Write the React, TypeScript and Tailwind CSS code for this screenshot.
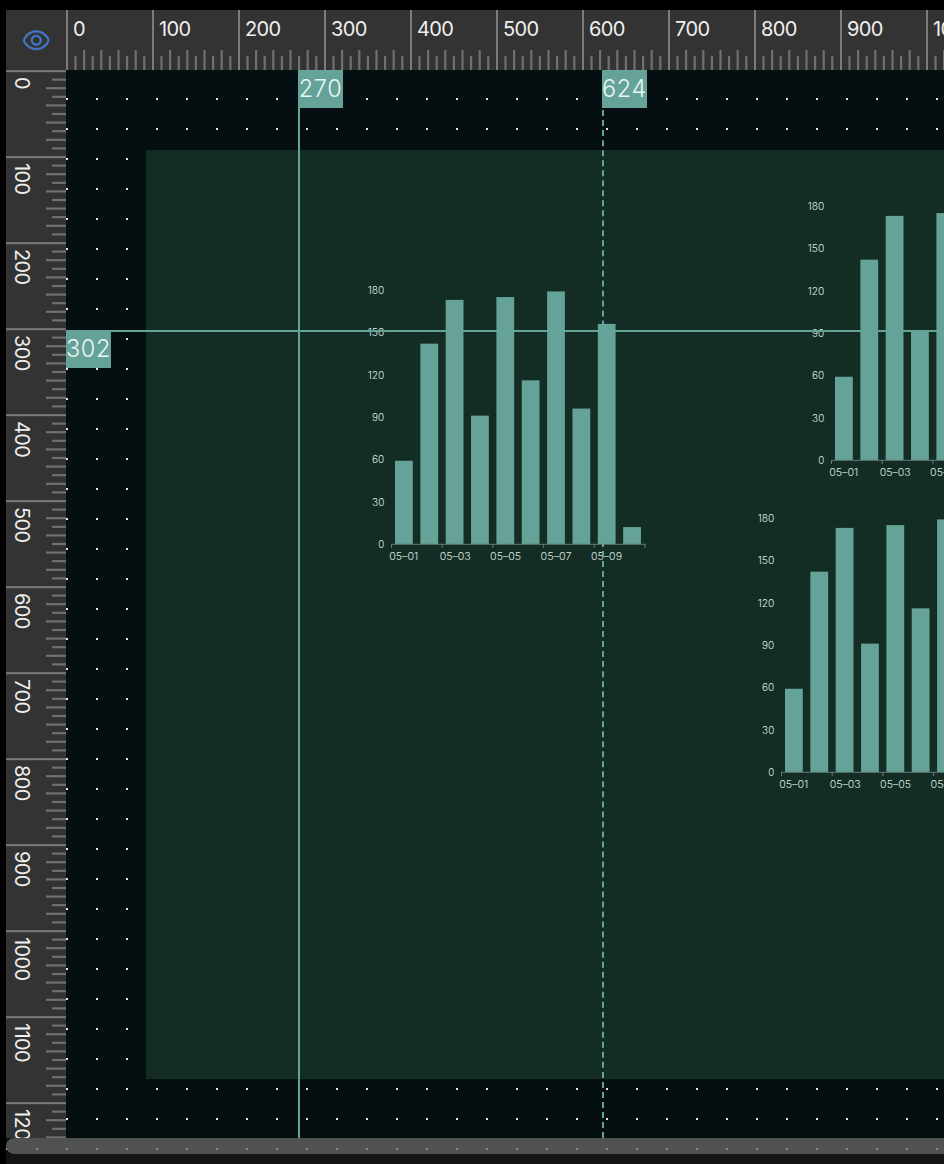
const MAJORS = [0, 100, 200, 300, 400, 500, 600, 700, 800, 900, 1000, 1100, 1200];
const TOP_MAJORS = MAJORS.slice(0, 11);
const MINORS = [1, 2, 3, 4, 5, 6, 7, 8, 9];
const VALUES = [59, 142, 173, 91, 175, 116, 179, 96, 156, 12];
const LEVELS = [0, 30, 60, 90, 120, 150, 180];

function EyeIcon() {
  return (
    <svg viewBox="0 0 32 32" className="h-[28.5px] w-[28.5px] fill-[#3f7ccd] stroke-[#3f7ccd] stroke-[0.5]">
      <path d="M30.94,15.66A16.69,16.69,0,0,0,16,5,16.69,16.69,0,0,0,1.06,15.66a1,1,0,0,0,0,.68A16.69,16.69,0,0,0,16,27,16.69,16.69,0,0,0,30.94,16.34,1,1,0,0,0,30.94,15.66ZM16,25c-5.3,0-10.9-3.93-12.93-9C5.1,10.93,10.7,7,16,7s10.9,3.93,12.93,9C26.9,21.07,21.3,25,16,25Z" />
      <path d="M16,10a6,6,0,1,0,6,6A6,6,0,0,0,16,10Zm0,10a4,4,0,1,1,4-4A4,4,0,0,1,16,20Z" />
    </svg>
  );
}

function TopRuler() {
  return (
    <div className="flex h-[60px] min-w-0 flex-1 overflow-hidden bg-[#333333]">
      {TOP_MAJORS.map((n) => (
        <div key={n} className="grid h-[60px] w-[86px] shrink-0">
          <svg className="col-start-1 row-start-1 h-[60px] w-[86px] fill-[#7b7b7b]">
            <rect x="0" y="0" width="2" height="60" />
            {MINORS.map((m) => (
              <rect key={m} x={m * 8.6 - 0.2} y={m % 2 ? 46 : 40} width="2.2" height="20" opacity="0.85" />
            ))}
          </svg>
          <span className="col-start-1 row-start-1 pt-[9px] pl-[7px] text-[20px] leading-[20px] tracking-[-0.6px] text-[#efefef]">{n}</span>
        </div>
      ))}
    </div>
  );
}

function SideRuler() {
  return (
    <div className="flex w-[60px] shrink-0 flex-col overflow-hidden bg-[#333333]">
      {MAJORS.map((n) => (
        <div key={n} className="grid h-[86.04px] w-[60px] shrink-0">
          <svg className="col-start-1 row-start-1 h-[86px] w-[60px] fill-[#7b7b7b]">
            <rect x="0" y="0.2" width="60" height="2" />
            {MINORS.map((m) => (
              <rect key={m} x={m % 2 ? 46 : 40} y={m * 8.6 - 0.1} width="20" height="2.2" opacity="0.85" />
            ))}
          </svg>
          <span className="col-start-1 row-start-1 justify-self-start pt-[7px] pl-[5.5px] text-[20px] leading-[20px] tracking-[-0.6px] text-[#efefef] [writing-mode:vertical-rl]">{n}</span>
        </div>
      ))}
    </div>
  );
}

function BarChart({ className }: { className: string }) {
  return (
    <svg width="300" height="290" className={`absolute ${className}`}>
      {LEVELS.map((v) => {
        const w = v >= 100 ? 16.6 : v > 0 ? 12.2 : 6;
        return (
          <text key={v} x={34.3 - w} y={277.9 - v * 1.41} textLength={w} lengthAdjust="spacingAndGlyphs" className="fill-[#dde7e3] text-[10px] font-light">
            {v}
          </text>
        );
      })}
      <g className="fill-[#65a297]">
        {VALUES.map((v, i) => (
          <rect key={i} x={45 + i * 25.35} y={274 - v * 1.411} width="17.8" height={v * 1.411} />
        ))}
      </g>
      <g className="fill-[#687a74]">
        <rect x="41" y="273.8" width="254.6" height="1" />
        {[0, 1, 2, 3, 4, 5].map((i) => (
          <rect key={i} x={41 + i * 50.7} y="274" width="1" height="4" />
        ))}
      </g>
      {[1, 3, 5, 7, 9].map((d, i) => (
        <text key={d} x={39.2 + i * 50.45} y="289.8" textLength={d === 1 ? 29 : 31} lengthAdjust="spacingAndGlyphs" className="fill-[#dde7e3] text-[10px] font-light">
          {`05–0${d}`}
        </text>
      ))}
    </svg>
  );
}

function GuideLabel({ value }: { value: number }) {
  return (
    <div className="flex h-[38px] w-[45px] items-center justify-center bg-[#65a297] text-[23.5px] leading-none font-[350] tracking-[0.6px] text-[#e9f6f3]">
      {value}
    </div>
  );
}

export default function App() {
  return (
    <div className="h-[1164px] w-[944px] overflow-hidden bg-black pt-[10px] pl-[6px] font-[Inter,'Liberation_Sans',sans-serif]">
      <div className="flex h-[1128px] flex-col">
        <div className="flex h-[60px] shrink-0">
          <div className="flex w-[60px] shrink-0 items-center justify-center bg-[#333333]">
            <EyeIcon />
          </div>
          <TopRuler />
        </div>
        <div className="flex h-[1068px]">
          <SideRuler />
          <div className="relative min-w-0 flex-1 overflow-hidden bg-[#050f12]">
            <svg className="absolute inset-0 h-full w-full">
              <defs>
                <pattern id="dots" width="30" height="30" patternUnits="userSpaceOnUse">
                  <rect y="28" width="2" height="2" fill="#f0e3e6" />
                </pattern>
              </defs>
              <rect width="100%" height="100%" fill="url(#dots)" />
            </svg>
            <div className="absolute top-[80px] left-[80px] h-[929px] w-[900px] bg-[#132d24]" />
            <BarChart className="top-[200px] left-[284px]" />
            <BarChart className="top-[116px] left-[724px]" />
            <BarChart className="top-[428px] left-[674px]" />
            <div className="absolute top-[260px] left-0 w-full border-t-2 border-[#65a297]">
              <div className="-mt-0.5">
                <GuideLabel value={302} />
              </div>
            </div>
            <div className="absolute top-0 left-[232px] h-full border-l-2 border-[#65a297]">
              <div className="-ml-0.5">
                <GuideLabel value={270} />
              </div>
            </div>
            <div className="absolute top-0 left-[536px] h-full border-l-2 border-dashed border-[#65a297]">
              <div className="-ml-0.5">
                <GuideLabel value={624} />
              </div>
            </div>
          </div>
        </div>
      </div>
      <div className="h-4 bg-[#050f12]">
        <svg className="block h-4 w-full">
          <rect y="10" width="2" height="2" fill="#e8dde0" />
          <rect width="970" height="16" rx="8" fill="#505251" />
          {Array.from({ length: 31 }, (_, i) => (
            <rect key={i} x={30 + i * 30} y="10" width="2" height="2" fill="#858786" />
          ))}
        </svg>
      </div>
      <div className="h-[10px] bg-[#141414]" />
    </div>
  );
}
